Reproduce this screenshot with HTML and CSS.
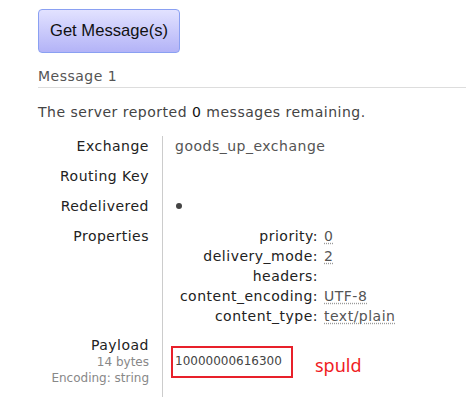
FILE: index.html
```html
<!DOCTYPE html>
<html>
<head>
<meta charset="utf-8">
<link rel="stylesheet" href="styles.css">
</head>
<body>
<div class="page">
  <button class="get-btn" type="button">Get Message(s)</button>
  <h3 class="msg-title">Message 1</h3>
  <p class="remaining">The server reported <b>0</b> messages remaining.</p>
  <table class="facts">
    <tr><th>Exchange</th><td>goods_up_exchange</td></tr>
    <tr><th>Routing Key</th><td></td></tr>
    <tr><th>Redelivered</th><td><span class="dot"></span></td></tr>
    <tr><th>Properties</th><td class="props-cell">
      <table class="props">
        <tr><th>priority:</th><td><abbr>0</abbr></td></tr>
        <tr><th>delivery_mode:</th><td><abbr>2</abbr></td></tr>
        <tr><th>headers:</th><td></td></tr>
        <tr><th>content_encoding:</th><td><abbr>UTF-8</abbr></td></tr>
        <tr><th>content_type:</th><td><abbr>text/plain</abbr></td></tr>
      </table>
    </td></tr>
    <tr class="payload-row"><th>Payload<sub>14 bytes</sub><sub>Encoding: string</sub></th>
      <td><div class="payload-line"><div class="payload-box">10000000616300</div><span class="note">spuld</span></div></td></tr>
  </table>
</div>
</body>
</html>
```
FILE: styles.css
```css
html, body { margin: 0; padding: 0; background: #fff; }
body { font-family: "DejaVu Sans", Verdana, sans-serif; font-size: 14px; letter-spacing: 0.5px; color: #222; }
.page { padding: 9px 0 0 38px; }
.get-btn {
  display: block;
  width: 142px; height: 44px;
  margin: 0;
  border: 1px solid #8aa0f2;
  border-radius: 4px;
  background: linear-gradient(#e2e2ff, #b3b3f7);
  font-family: "Liberation Sans", Arial, sans-serif;
  font-size: 16.6px;
  letter-spacing: 0;
  color: #111;
  padding: 0;
}
.msg-title {
  margin: 15px 0 0 0;
  font-weight: normal;
  font-size: 14px;
  color: #555;
  padding-bottom: 2px;
  border-bottom: 1px solid #ddd;
  line-height: 17px;
}
.remaining { margin: 16px 0 0 0; color: #444; line-height: 17px; }
.remaining b { font-weight: normal; color: #111; }
.facts { border-collapse: collapse; margin-top: 15px; }
.facts > tbody > tr > th {
  width: 111px;
  text-align: right;
  font-weight: normal;
  color: #222;
  padding: 2px 13px 11px 0;
  vertical-align: top;
  line-height: 17px;
  white-space: nowrap;
}
.facts > tbody > tr > td {
  border-left: 1px solid #ccc;
  padding: 2px 0 11px 12px;
  vertical-align: top;
  color: #555;
  line-height: 17px;
  width: 290px;
  height: 17px;
}
.dot {
  display: block;
  width: 6px; height: 6px;
  margin: 5px 0 0 1px;
  border-radius: 50%;
  background: #444;
}
.facts > tbody > tr > td.props-cell { padding-top: 0; padding-bottom: 9px; }
.props { border-collapse: collapse; }
.props th {
  width: 143px;
  text-align: right;
  font-weight: normal;
  color: #222;
  padding: 0 6px 0 0;
  line-height: 20px;
  height: 20px;
  white-space: nowrap;
}
.props td { padding: 0; color: #555; line-height: 20px; }
abbr { text-decoration: underline dotted #999; text-underline-offset: 2px; }
.payload-row th { padding-bottom: 11px !important; }
.payload-row th sub {
  display: block;
  font-size: 12px;
  letter-spacing: 0;
  color: #888;
  vertical-align: baseline;
  line-height: 16px;
}
.payload-row td { padding-top: 11px !important; padding-bottom: 11px !important; padding-left: 8px !important; }
.payload-line { display: flex; align-items: center; gap: 22px; }
.payload-box {
  width: 116px; height: 28px;
  border: 2px solid #e8202a;
  padding: 0 0 0 2px;
  font-size: 12px;
  letter-spacing: 0;
  color: #444;
  line-height: 26px;
  box-sizing: content-box;
}
.note { color: #f01c24; font-size: 18px; letter-spacing: 0; font-family: "Noto Sans", sans-serif; margin-top: 6px; }
```
